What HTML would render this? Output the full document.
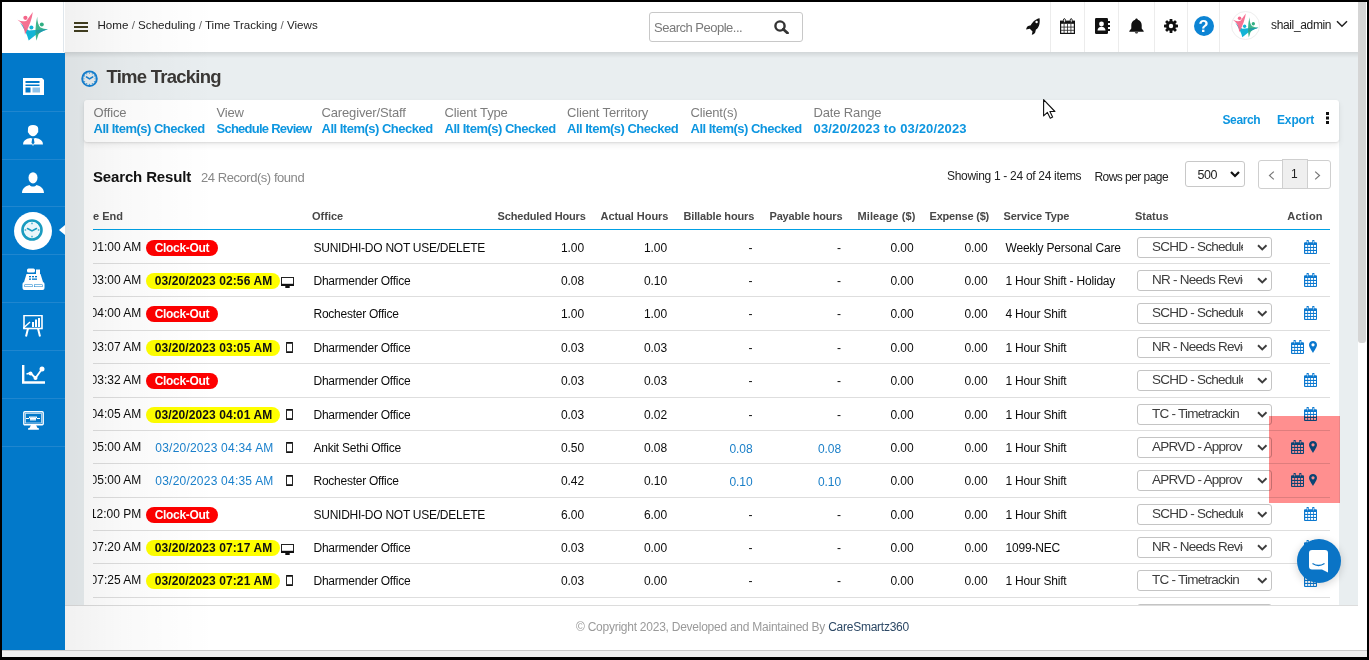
<!DOCTYPE html><html><head><meta charset="utf-8"><title>Time Tracking</title><style>*{box-sizing:border-box;margin:0;padding:0}
html,body{width:1369px;height:660px;overflow:hidden;background:#000;font-family:"Liberation Sans",sans-serif;}
.a{position:absolute}
#vp{position:absolute;left:2px;top:2px;width:1365px;height:655px;background:#fff;overflow:hidden}
/* page coordinates: children of body use absolute coords */
#hdr{position:absolute;left:2px;top:2px;width:1356px;height:50px;background:#fff;}
#logo{position:absolute;left:2px;top:2px;width:62px;height:50px;background:#fff;border-right:1px solid #dfe6ec}
#hgrad{display:none}
#hshadow{position:absolute;left:64px;top:52px;width:1294px;height:6px;background:linear-gradient(180deg,rgba(0,0,0,.10),rgba(0,0,0,0))}
#side{position:absolute;left:2px;top:52.6px;width:63px;height:597.4px;background:#0279ca}
.sep{position:absolute;left:2px;width:63px;height:1px;background:#1f86cf}
#main{position:absolute;left:65px;top:52px;width:1293px;height:553px;background:#e9eef0}
#sshadow{position:absolute;left:65px;top:2px;width:150px;height:648px;background:linear-gradient(90deg,rgba(0,0,0,.055),rgba(0,0,0,.025) 40%,rgba(0,0,0,0));pointer-events:none}
#footer{position:absolute;left:65px;top:605px;width:1293px;height:45px;background:#fff;border-top:1px solid #dcdcdc}
#hscroll{position:absolute;left:2px;top:650px;width:1365px;height:7px;background:#efefef;border-top:1px solid #c9c9c9}
#vscroll{position:absolute;left:1358px;top:2px;width:9px;height:648px;background:#fff}
#thumb{position:absolute;left:1358px;top:2px;width:8px;height:341px;background:#d5d5d5;border-radius:0 0 3px 3px}
.ham{position:absolute;left:74.2px;width:14px;height:1.7px;background:#423f20}
#crumb{position:absolute;left:97.5px;top:17.5px;font-size:11.6px;line-height:14px;color:#222;letter-spacing:0px;white-space:nowrap}
#crumb .sl{color:#666}
#sbox{position:absolute;left:649px;top:12px;width:154px;height:30px;border:1px solid #c8c8c8;border-radius:3px;background:#fff}
#sph{position:absolute;left:654px;top:20px;font-size:13px;line-height:15px;color:#7a7a7a;letter-spacing:-0.5px;white-space:nowrap}
.vsep{position:absolute;top:2px;width:1px;height:50px;background:#ececec}
#uname{position:absolute;left:1271px;top:17.5px;font-size:12px;line-height:14px;color:#222;letter-spacing:-0.35px;white-space:nowrap}
#title{position:absolute;left:106.5px;top:67.3px;font-size:18.5px;line-height:20px;font-weight:700;color:#3a3836;letter-spacing:-0.75px;white-space:nowrap}
.card{position:absolute;background:#fff;box-shadow:0 1px 3px rgba(0,0,0,.16)}
.fl{position:absolute;top:104.5px;font-size:13px;line-height:15px;color:#7d7d7d;letter-spacing:-0.15px;white-space:nowrap}
.fv{position:absolute;top:120.5px;font-size:13px;line-height:15px;color:#0d96e0;font-weight:700;letter-spacing:-0.5px;white-space:nowrap}
.lnk{position:absolute;top:113px;font-size:12px;line-height:14px;color:#0d96e0;font-weight:700;white-space:nowrap}
#sr{position:absolute;left:93px;top:168px;font-size:15px;line-height:17px;font-weight:700;color:#111;letter-spacing:-0.15px;white-space:nowrap}
#rf{position:absolute;left:201px;top:170px;font-size:13px;line-height:15px;color:#888;letter-spacing:-0.45px;white-space:nowrap}
.ptxt{position:absolute;font-size:12px;line-height:14px;color:#222;white-space:nowrap}
#tbl{position:absolute;left:0;top:0;width:1339px;height:605px;clip-path:polygon(93px 0,1339px 0,1339px 605px,93px 605px)}
.th{position:absolute;top:209.8px;font-size:11px;line-height:13px;font-weight:700;color:#484848;white-space:nowrap}
#blue{position:absolute;left:93px;top:228.8px;width:1237px;height:1.6px;background:#00a0e4}
.row{position:absolute;left:0;width:1339px;font-size:12px;color:#0c0c0c}
.row>div{position:absolute;top:10px;line-height:14px;white-space:nowrap}
.row::after{content:"";position:absolute;left:93px;width:1237px;bottom:0;height:1px;background:#dedede}
.row>.t1{right:1197.7px;letter-spacing:0px;top:9.3px}
.badge{left:146px;height:16px;border-radius:8px;font-weight:700;text-align:center}
.row>.badge{top:9px;line-height:16px}
.co{width:72px;background:#fe0000;color:#fff;letter-spacing:-0.3px}
.yl{width:134px;background:#ffff00;color:#111;letter-spacing:0.1px;padding-left:1px}
.bt{left:155.3px;color:#1a80cc;letter-spacing:0.22px}
.dev{line-height:0}
.row>.mon{left:281px;top:13px}
.row>.mob{left:285.5px;top:11px}
.off{left:313.5px;letter-spacing:-0.25px}
.num{letter-spacing:-0.1px}
.row>.num.blue{color:#1a7fc8;top:11px}
.svc{left:1005.5px;letter-spacing:-0.2px}
.row>.sel{left:1137px;top:5.5px;width:135px;height:21px;border:1px solid #c4c4c4;border-radius:3px;background:#fff}
.sel span{position:absolute;left:14px;top:1.3px;width:91px;overflow:hidden;font-size:13.5px;line-height:16px;color:#3c3c3c;letter-spacing:-0.75px;white-space:nowrap}
.chev{position:absolute;left:119px;top:6px;width:10.5px;height:7px}
.act{line-height:0;color:#0b78cf}
.row>.act.one{left:1303.5px;top:9px}
.row>.act.two{left:1291px;top:9px}
.cal{width:13px;height:14px;display:inline-block;vertical-align:top}
.pin{width:8px;height:12px;display:inline-block;vertical-align:top;margin-left:5px;margin-top:1px}
#overlay{position:absolute;left:1269px;top:416px;width:71px;height:87px;background:#ff8f8f;mix-blend-mode:multiply}
#chat{position:absolute;left:1296.8px;top:538.8px;width:44px;height:44px;border-radius:50%;background:#0a74c6;box-shadow:0 2px 8px rgba(0,0,0,.18)}
#foot{position:absolute;left:576px;top:620px;font-size:12px;line-height:14px;color:#9a9a9a;letter-spacing:-0.25px;white-space:nowrap}
#foot b{font-weight:400;color:#2c4865}
#cursor{position:absolute;left:1042.8px;top:98.8px}
</style></head><body><div id="vp"></div>
<div id="hdr"></div>
<div id="hgrad"></div>
<div id="logo"></div>
<div class="a" style="left:14px;top:8px;line-height:0"><svg viewBox="0 0 40 36" width="40" height="36"><path d="M6 14.5 Q11.5 20.5 15 22.5 Q24 21.5 33.8 21.3 Q25 24.5 21 27.5 L14.7 32.4 Q12.5 24 6 14.5 Z" fill="#12b4d6"/><path d="M3.5 11.7 Q8.5 14.2 12.5 12.8 L18.8 4.1 Q18 13 11 26.4 Q10.2 18.5 6.8 14.6 Z" fill="#f4668a" fill-opacity="0.93"/><path d="M23.2 8.7 Q23.3 16.5 26.5 19.5 Q29.5 21.2 33.8 21.3 Q27.5 22.5 24.5 26.3 L22.4 32.7 Q20.2 22 23.2 8.7 Z" fill="#2fae82" fill-opacity="0.92"/><path d="M22 22 L33.8 21.3 Q27 24 22.6 25.5z" fill="#1e8fb8" fill-opacity="0.6"/><circle cx="11.4" cy="9.8" r="2.1" fill="#f4668a"/><circle cx="17.4" cy="19.4" r="2" fill="#12b4d6"/><circle cx="27.8" cy="16.4" r="2" fill="#2fae82"/></svg></div>
<div id="main"></div>
<div class="card" style="left:84px;top:141px;width:1255px;height:470px;box-shadow:none"></div>
<div id="hshadow"></div>
<div id="side"></div>
<div class="sep" style="top:111px"></div>
<div class="sep" style="top:159px"></div>
<div class="sep" style="top:206px"></div>
<div class="sep" style="top:254px"></div>
<div class="sep" style="top:302px"></div>
<div class="sep" style="top:350px"></div>
<div class="sep" style="top:398px"></div>
<div class="sep" style="top:446px"></div>
<!-- sidebar icons -->
<svg class="a" style="left:22px;top:77px" width="23" height="19" viewBox="0 0 23 19"><path d="M1 1h19l2 2v15H1z" fill="#fff"/><rect x="20.5" y="3" width="1.5" height="15" fill="#fff"/><rect x="3.5" y="4" width="14" height="2" fill="#0279ca"/><rect x="3.5" y="7.5" width="14" height="1.5" fill="#0279ca"/><rect x="3.5" y="10.5" width="5" height="5" fill="#0279ca"/><rect x="10.5" y="10.5" width="7.5" height="5" fill="#8fc3ea"/></svg>
<svg class="a" style="left:14px;top:118px" width="38" height="34" viewBox="0 0 38 34"><path d="M14 10.5 Q14 7 19 7 Q24 7 24.2 10.5 L24.2 13.2 Q24.6 14.2 23.6 14.8 Q22 18.2 19 18.2 Q16 18.2 14.4 14.8 Q13.5 14.2 13.9 13.2 Z" fill="#fff"/><path d="M9 26.5 Q9 21.2 16.5 20 L19 20.8 L21.5 20 Q29 21.2 29 26.5 Z" fill="#fff"/><path d="M18.2 20.4 L19.8 20.4 L20.5 24.8 L19 26.6 L17.5 24.8 Z" fill="#0279ca"/><path d="M18.1 26.5 h1.8 L19 28 Z" fill="#fff"/></svg>
<svg class="a" style="left:22px;top:172px" width="22" height="21" viewBox="0 0 22 21"><ellipse cx="11" cy="5.8" rx="4.5" ry="5.6" fill="#fff"/><path d="M0 21c0-4.5 3.5-7 7.5-8 1 1 2 1.5 3.5 1.5s2.5-.5 3.5-1.5c4 1 7.5 3.5 7.5 8z" fill="#fff"/></svg>
<div class="a" style="left:13.5px;top:211.8px;width:38px;height:38px;border-radius:50%;background:#fff"></div>
<svg class="a" style="left:21px;top:219px" width="22" height="22" viewBox="0 0 22 22"><circle cx="11" cy="11" r="9.5" fill="none" stroke="#1a9cc0" stroke-width="2.6"/><circle cx="11" cy="11" r="7.6" fill="#eaf6fa"/><g fill="#1a9cc0"><rect x="10.4" y="3.6" width="1.2" height="1.6"/><rect x="10.4" y="16.8" width="1.2" height="1.6"/><rect x="3.6" y="10.4" width="1.6" height="1.2"/><rect x="16.8" y="10.4" width="1.6" height="1.2"/></g><path d="M6.5 9.5 L11 12 L15.5 9.5" fill="none" stroke="#1a9cc0" stroke-width="1.5" stroke-linecap="round"/></svg>
<svg class="a" style="left:59px;top:225px" width="6" height="10" viewBox="0 0 6 10"><path d="M6 0L0 5l6 5z" fill="#fff"/></svg>
<svg class="a" style="left:22px;top:268px" width="23" height="22" viewBox="0 0 23 22"><rect x="5" y="0.5" width="8" height="4" rx="1.5" fill="#fff"/><rect x="14" y="1.5" width="4" height="5" fill="#fff"/><path d="M4.5 6h14l2.5 8H2z" fill="#fff"/><g fill="#0279ca"><rect x="7" y="8" width="2" height="1.3"/><rect x="10" y="8" width="2" height="1.3"/><rect x="13" y="8" width="2" height="1.3"/><rect x="7" y="10.5" width="2" height="1.3"/><rect x="10" y="10.5" width="5" height="1.3"/></g><rect x="0.5" y="14" width="22" height="8" rx="2" fill="#fff"/><rect x="2.5" y="16.5" width="8" height="2.5" fill="#0279ca"/><rect x="12" y="16.5" width="8.5" height="2.5" fill="#0279ca"/><rect x="3" y="17" width="7" height="1.5" fill="#fff"/><rect x="12.5" y="17" width="7.5" height="1.5" fill="#fff"/></svg>
<svg class="a" style="left:23px;top:315px" width="20" height="22" viewBox="0 0 20 22"><rect x="1" y="0.5" width="18" height="13" fill="none" stroke="#fff" stroke-width="1.6"/><g fill="#fff"><rect x="9" y="7" width="2" height="5"/><rect x="12" y="4.5" width="2" height="7.5"/><rect x="15" y="3" width="2" height="9"/></g><path d="M0 13.5 L7 7" stroke="#fff" stroke-width="1.4"/><path d="M5 13.5 L3 21.5 M15 13.5 L17 21.5" stroke="#fff" stroke-width="2"/></svg>
<svg class="a" style="left:22px;top:365px" width="23" height="19" viewBox="0 0 23 19"><path d="M1.2 0v17.5H23" fill="none" stroke="#fff" stroke-width="2.4"/><path d="M4.5 9 L8.5 8 L13.5 13 L20 4" fill="none" stroke="#fff" stroke-width="1.8"/><circle cx="8.5" cy="8.5" r="2" fill="#fff"/><circle cx="13.5" cy="13" r="2" fill="#fff"/><circle cx="20" cy="4" r="2.5" fill="#fff"/></svg>
<svg class="a" style="left:22.5px;top:411px" width="21" height="19" viewBox="0 0 21 19"><rect x="0.8" y="0.8" width="19.4" height="13" rx="1" fill="none" stroke="#fff" stroke-width="1.4"/><rect x="2.5" y="2.5" width="16" height="9.5" fill="none" stroke="#cfe6f7" stroke-width="0.8"/><path d="M3 7.5h3l1-2 1 4 1-4 1 4 1-4 1 4 1-4 1 2h3" fill="none" stroke="#fff" stroke-width="1"/><path d="M8 14h5l1.5 3H6.5z" fill="#fff"/><rect x="5" y="17" width="11" height="1.8" rx="0.9" fill="#fff"/></svg>
<!-- header -->
<div class="ham" style="top:22.1px"></div><div class="ham" style="top:26px"></div><div class="ham" style="top:30px"></div>
<div id="crumb">Home <span class="sl">/</span> Scheduling <span class="sl">/</span> Time Tracking <span class="sl">/</span> Views</div>
<div id="sbox"></div>
<div id="sph">Search People...</div>
<svg class="a" style="left:774px;top:20px" width="15" height="14" viewBox="0 0 15 14"><circle cx="6" cy="6" r="4.6" fill="none" stroke="#333" stroke-width="2.4"/><path d="M9.3 9.3 L13.5 13" stroke="#333" stroke-width="2.8" stroke-linecap="round"/></svg>
<div class="vsep" style="left:1050px"></div>
<div class="vsep" style="left:1084px"></div>
<div class="vsep" style="left:1118px"></div>
<div class="vsep" style="left:1154px"></div>
<div class="vsep" style="left:1187px"></div>
<div class="vsep" style="left:1219px"></div>
<svg class="a" style="left:1025px;top:17px" width="16" height="19" viewBox="0 0 16 19"><path d="M14.6 1.2 C10.5 1.8 7.5 5 5.8 8.2 L3.2 9 C2 9.6 1.3 11 1.1 12.6 L4.8 11.8 L7.5 14.5 L6.8 17.8 C8.4 17.5 9.6 16.6 10.2 15.4 L10.9 12.6 C13.8 10.8 15.2 7 14.6 1.2 Z" fill="#111"/><circle cx="11.6" cy="5" r="1.2" fill="#fff"/></svg>
<svg class="a" style="left:1060px;top:18px" width="15" height="16" viewBox="0 0 15 16"><rect x="0.6" y="3.2" width="13.8" height="12.2" fill="#fff" stroke="#111" stroke-width="1.2"/><rect x="0.6" y="3.2" width="13.8" height="2.6" fill="#111"/><path d="M4.1 5.8v9.6M7.5 5.8v9.6M10.9 5.8v9.6M0.6 9.1h13.8M0.6 12.3h13.8" stroke="#222" stroke-width="0.8"/><ellipse cx="4.4" cy="2.6" rx="1" ry="2.1" fill="#fff" stroke="#111" stroke-width="0.9"/><ellipse cx="11.2" cy="2.6" rx="1" ry="2.1" fill="#fff" stroke="#111" stroke-width="0.9"/></svg>
<svg class="a" style="left:1095px;top:18px" width="15" height="16" viewBox="0 0 15 16"><rect x="0" y="0" width="13" height="16" rx="1.2" fill="#111"/><rect x="13" y="3" width="2" height="2" fill="#111"/><rect x="13" y="7" width="2" height="2" fill="#111"/><rect x="13" y="11" width="2" height="2" fill="#111"/><circle cx="6.5" cy="6" r="2.4" fill="#fff"/><path d="M2.5 12.5c0-2.5 1.8-3.8 4-3.8s4 1.3 4 3.8z" fill="#fff"/></svg>
<svg class="a" style="left:1129px;top:18px" width="15" height="16" viewBox="0 0 15 16"><path d="M7.5 0.5c-.8 0-1.3.6-1.3 1.3C3.8 2.4 2.3 4.5 2.3 7v3.5L0.3 13v.8h14.4V13l-2-2.5V7c0-2.5-1.5-4.6-3.9-5.2 0-.7-.5-1.3-1.3-1.3z" fill="#111"/><path d="M5.8 14.3a1.8 1.8 0 003.4 0z" fill="#111"/></svg>
<svg class="a" style="left:1164px;top:19px" width="14" height="14" viewBox="0 0 14 14"><g fill="#111"><circle cx="7" cy="7" r="5"/><rect x="5.6" y="0" width="2.8" height="14" rx="0.6"/><rect x="0" y="5.6" width="14" height="2.8" rx="0.6"/><rect x="5.6" y="0" width="2.8" height="14" rx="0.6" transform="rotate(45 7 7)"/><rect x="5.6" y="0" width="2.8" height="14" rx="0.6" transform="rotate(-45 7 7)"/></g><circle cx="7" cy="7" r="2.2" fill="#fff"/></svg>
<div class="a" style="left:1193.5px;top:15.7px;width:20px;height:20px;border-radius:50%;background:#0c84d4"></div>
<div class="a" style="left:1193.5px;top:15.5px;width:20px;height:20px;font-size:16.5px;line-height:20px;font-weight:700;color:#fff;text-align:center">?</div>
<div class="a" style="left:1231px;top:11px;width:29px;height:29px;border-radius:50%;border:1px solid #eee;background:#fff"></div>
<div class="a" style="left:1229.5px;top:10px;line-height:0"><svg viewBox="0 0 40 36" width="33.6" height="30.2"><path d="M6 14.5 Q11.5 20.5 15 22.5 Q24 21.5 33.8 21.3 Q25 24.5 21 27.5 L14.7 32.4 Q12.5 24 6 14.5 Z" fill="#12b4d6"/><path d="M3.5 11.7 Q8.5 14.2 12.5 12.8 L18.8 4.1 Q18 13 11 26.4 Q10.2 18.5 6.8 14.6 Z" fill="#f4668a" fill-opacity="0.93"/><path d="M23.2 8.7 Q23.3 16.5 26.5 19.5 Q29.5 21.2 33.8 21.3 Q27.5 22.5 24.5 26.3 L22.4 32.7 Q20.2 22 23.2 8.7 Z" fill="#2fae82" fill-opacity="0.92"/><path d="M22 22 L33.8 21.3 Q27 24 22.6 25.5z" fill="#1e8fb8" fill-opacity="0.6"/><circle cx="11.4" cy="9.8" r="2.1" fill="#f4668a"/><circle cx="17.4" cy="19.4" r="2" fill="#12b4d6"/><circle cx="27.8" cy="16.4" r="2" fill="#2fae82"/></svg></div>
<div id="uname">shail_admin</div>
<svg class="a" style="left:1336px;top:20px" width="12" height="8" viewBox="0 0 12 8"><path d="M1 1.2 L6 6.3 L11 1.2" fill="none" stroke="#222" stroke-width="1.5"/></svg>
<!-- title -->
<svg class="a" style="left:81px;top:70px" width="17" height="17" viewBox="0 0 17 17"><circle cx="8.5" cy="8.7" r="7.3" fill="none" stroke="#1582d4" stroke-width="1.9"/><circle cx="8.50" cy="3.10" r="0.55" fill="#1a88d6"/><circle cx="11.30" cy="3.85" r="0.55" fill="#1a88d6"/><circle cx="13.35" cy="5.90" r="0.55" fill="#1a88d6"/><circle cx="14.10" cy="8.70" r="0.55" fill="#1a88d6"/><circle cx="13.35" cy="11.50" r="0.55" fill="#1a88d6"/><circle cx="11.30" cy="13.55" r="0.55" fill="#1a88d6"/><circle cx="8.50" cy="14.30" r="0.55" fill="#1a88d6"/><circle cx="5.70" cy="13.55" r="0.55" fill="#1a88d6"/><circle cx="3.65" cy="11.50" r="0.55" fill="#1a88d6"/><circle cx="2.90" cy="8.70" r="0.55" fill="#1a88d6"/><circle cx="3.65" cy="5.90" r="0.55" fill="#1a88d6"/><circle cx="5.70" cy="3.85" r="0.55" fill="#1a88d6"/><path d="M5 6.6 L8.5 8.9 L12.2 6.6" fill="none" stroke="#1582d4" stroke-width="1.7" stroke-linejoin="round"/></svg>
<div id="title">Time Tracking</div>
<!-- filter card -->
<div class="card" style="left:84px;top:100px;width:1255px;height:42px;border-radius:3px;box-shadow:0 1px 2px rgba(0,0,0,.10),0 3px 6px rgba(0,0,0,.07)"></div>
<div class="fl" style="left:93.5px">Office</div><div class="fv" style="left:93.5px">All Item(s) Checked</div>
<div class="fl" style="left:216.5px">View</div><div class="fv" style="left:216.5px;letter-spacing:-0.75px">Schedule Review</div>
<div class="fl" style="left:321.5px">Caregiver/Staff</div><div class="fv" style="left:321.5px">All Item(s) Checked</div>
<div class="fl" style="left:444.5px">Client Type</div><div class="fv" style="left:444.5px">All Item(s) Checked</div>
<div class="fl" style="left:567px">Client Territory</div><div class="fv" style="left:567px">All Item(s) Checked</div>
<div class="fl" style="left:690.5px">Client(s)</div><div class="fv" style="left:690.5px">All Item(s) Checked</div>
<div class="fl" style="left:813.5px">Date Range</div><div class="fv" style="left:813.5px;letter-spacing:0.15px">03/20/2023 to 03/20/2023</div>
<div class="lnk" style="left:1222.5px;letter-spacing:-0.4px">Search</div>
<div class="lnk" style="left:1277px;letter-spacing:-0.15px">Export</div>
<svg class="a" style="left:1326px;top:112px" width="3" height="12" viewBox="0 0 3 12"><rect x="0" y="0" width="3" height="3" fill="#111"/><rect x="0" y="4.5" width="3" height="3" fill="#111"/><rect x="0" y="9" width="3" height="3" fill="#111"/></svg>
<!-- result card -->
<div id="sr">Search Result</div>
<div id="rf">24 Record(s) found</div>
<div class="ptxt" style="left:947px;top:169px;letter-spacing:-0.3px">Showing 1 - 24 of 24 items</div>
<div class="ptxt" style="left:1094.5px;top:170px;letter-spacing:-0.55px">Rows per page</div>
<div class="a" style="left:1184.5px;top:161px;width:60px;height:25.5px;border:1px solid #c8c8c8;border-radius:3px;background:#fff"></div>
<div class="ptxt" style="left:1197.5px;top:167.5px;font-size:12.5px;line-height:14px;color:#222;letter-spacing:-0.4px">500</div>
<svg class="a" style="left:1230px;top:171px" width="10" height="7" viewBox="0 0 10 7"><path d="M1 1 L5 5 L9 1" fill="none" stroke="#111" stroke-width="2.2"/></svg>
<div class="a" style="left:1258px;top:160px;width:73px;height:28.5px;border:1px solid #cfcfcf;border-radius:3px;background:#fff"></div>
<div class="a" style="left:1281.5px;top:159px;width:26.5px;height:29.5px;border:1px solid #cfcfcf;background:#efefef"></div>
<div class="ptxt" style="left:1291px;top:166.5px;font-size:12px;line-height:14px;color:#222">1</div>
<svg class="a" style="left:1267.5px;top:170.5px" width="7" height="9" viewBox="0 0 7 9"><path d="M5.8 0.6 L1.5 4.5 L5.8 8.4" fill="none" stroke="#777" stroke-width="1.2"/></svg>
<svg class="a" style="left:1314px;top:170.5px" width="7" height="9" viewBox="0 0 7 9"><path d="M1.2 0.6 L5.5 4.5 L1.2 8.4" fill="none" stroke="#777" stroke-width="1.2"/></svg>
<div id="tbl">
<div class="th" style="left:93px">e End</div>
<div class="th" style="left:312px">Office</div>
<div class="th" style="left:497.5px;letter-spacing:-0.15px">Scheduled Hours</div>
<div class="th" style="left:600.5px;letter-spacing:-0.05px">Actual Hours</div>
<div class="th" style="left:683.5px;letter-spacing:-0.15px">Billable hours</div>
<div class="th" style="left:769.5px;letter-spacing:-0.18px">Payable hours</div>
<div class="th" style="left:857.5px;letter-spacing:0.1px">Mileage ($)</div>
<div class="th" style="left:929.5px;letter-spacing:-0.2px">Expense ($)</div>
<div class="th" style="left:1003.5px;letter-spacing:-0.1px">Service Type</div>
<div class="th" style="left:1135px">Status</div>
<div class="th" style="left:1287.3px;letter-spacing:0.2px">Action</div>
<div id="blue"></div>
<div class="row" style="top:231px;height:33px"><div class="t1">01:00 AM</div><div class="badge co">Clock-Out</div><div class="off">SUNIDHI-DO NOT USE/DELETE</div><div class="num" style="right:755px">1.00</div><div class="num" style="right:672px">1.00</div><div class="num" style="right:586.5px">-</div><div class="num" style="right:498.0px">-</div><div class="num" style="right:425.5px">0.00</div><div class="num" style="right:351.5px">0.00</div><div class="svc">Weekly Personal Care</div><div class="sel"><span>SCHD - Schedule</span><svg class="chev" viewBox="0 0 10.5 7"><path d="M1 1.2 L5.25 5.4 L9.5 1.2" fill="none" stroke="#3d3d3d" stroke-width="1.9"/></svg></div><div class="act one"><svg class="cal" viewBox="0 0 13 14"><path d="M1 2.2h11a1 1 0 011 1V13a1 1 0 01-1 1H1a1 1 0 01-1-1V3.2a1 1 0 011-1z" fill="currentColor"/><rect x="2.6" y="0" width="2.2" height="4" rx="0.6" fill="currentColor"/><rect x="8.2" y="0" width="2.2" height="4" rx="0.6" fill="currentColor"/><rect x="3.3" y="1" width="0.8" height="2.4" fill="#bfe0f7"/><rect x="8.9" y="1" width="0.8" height="2.4" fill="#bfe0f7"/><g fill="#fff"><rect x="1.2" y="5.0" width="2.1" height="1.9"/><rect x="4.1" y="5.0" width="2.1" height="1.9"/><rect x="7.0" y="5.0" width="2.1" height="1.9"/><rect x="9.9" y="5.0" width="2.1" height="1.9"/><rect x="1.2" y="8.0" width="2.1" height="1.9"/><rect x="4.1" y="8.0" width="2.1" height="1.9"/><rect x="7.0" y="8.0" width="2.1" height="1.9"/><rect x="9.9" y="8.0" width="2.1" height="1.9"/><rect x="1.2" y="11.0" width="2.1" height="1.9"/><rect x="4.1" y="11.0" width="2.1" height="1.9"/><rect x="7.0" y="11.0" width="2.1" height="1.9"/><rect x="9.9" y="11.0" width="2.1" height="1.9"/></g></svg></div></div><div class="row" style="top:264px;height:33px"><div class="t1">03:00 AM</div><div class="badge yl">03/20/2023 02:56 AM</div><div class="dev mon"><svg viewBox="0 0 13 11" width="13" height="11"><rect x="0.5" y="0.5" width="12" height="7.5" fill="none" stroke="#222" stroke-width="1"/><rect x="0" y="6.8" width="13" height="2.2" fill="#111"/><rect x="4.3" y="9" width="4.4" height="2" fill="#111"/></svg></div><div class="off">Dharmender Office</div><div class="num" style="right:755px">0.08</div><div class="num" style="right:672px">0.10</div><div class="num" style="right:586.5px">-</div><div class="num" style="right:498.0px">-</div><div class="num" style="right:425.5px">0.00</div><div class="num" style="right:351.5px">0.00</div><div class="svc">1 Hour Shift - Holiday</div><div class="sel"><span>NR - Needs Revie</span><svg class="chev" viewBox="0 0 10.5 7"><path d="M1 1.2 L5.25 5.4 L9.5 1.2" fill="none" stroke="#3d3d3d" stroke-width="1.9"/></svg></div><div class="act one"><svg class="cal" viewBox="0 0 13 14"><path d="M1 2.2h11a1 1 0 011 1V13a1 1 0 01-1 1H1a1 1 0 01-1-1V3.2a1 1 0 011-1z" fill="currentColor"/><rect x="2.6" y="0" width="2.2" height="4" rx="0.6" fill="currentColor"/><rect x="8.2" y="0" width="2.2" height="4" rx="0.6" fill="currentColor"/><rect x="3.3" y="1" width="0.8" height="2.4" fill="#bfe0f7"/><rect x="8.9" y="1" width="0.8" height="2.4" fill="#bfe0f7"/><g fill="#fff"><rect x="1.2" y="5.0" width="2.1" height="1.9"/><rect x="4.1" y="5.0" width="2.1" height="1.9"/><rect x="7.0" y="5.0" width="2.1" height="1.9"/><rect x="9.9" y="5.0" width="2.1" height="1.9"/><rect x="1.2" y="8.0" width="2.1" height="1.9"/><rect x="4.1" y="8.0" width="2.1" height="1.9"/><rect x="7.0" y="8.0" width="2.1" height="1.9"/><rect x="9.9" y="8.0" width="2.1" height="1.9"/><rect x="1.2" y="11.0" width="2.1" height="1.9"/><rect x="4.1" y="11.0" width="2.1" height="1.9"/><rect x="7.0" y="11.0" width="2.1" height="1.9"/><rect x="9.9" y="11.0" width="2.1" height="1.9"/></g></svg></div></div><div class="row" style="top:297px;height:34px"><div class="t1">04:00 AM</div><div class="badge co">Clock-Out</div><div class="off">Rochester Office</div><div class="num" style="right:755px">1.00</div><div class="num" style="right:672px">1.00</div><div class="num" style="right:586.5px">-</div><div class="num" style="right:498.0px">-</div><div class="num" style="right:425.5px">0.00</div><div class="num" style="right:351.5px">0.00</div><div class="svc">4 Hour Shift</div><div class="sel"><span>SCHD - Schedule</span><svg class="chev" viewBox="0 0 10.5 7"><path d="M1 1.2 L5.25 5.4 L9.5 1.2" fill="none" stroke="#3d3d3d" stroke-width="1.9"/></svg></div><div class="act one"><svg class="cal" viewBox="0 0 13 14"><path d="M1 2.2h11a1 1 0 011 1V13a1 1 0 01-1 1H1a1 1 0 01-1-1V3.2a1 1 0 011-1z" fill="currentColor"/><rect x="2.6" y="0" width="2.2" height="4" rx="0.6" fill="currentColor"/><rect x="8.2" y="0" width="2.2" height="4" rx="0.6" fill="currentColor"/><rect x="3.3" y="1" width="0.8" height="2.4" fill="#bfe0f7"/><rect x="8.9" y="1" width="0.8" height="2.4" fill="#bfe0f7"/><g fill="#fff"><rect x="1.2" y="5.0" width="2.1" height="1.9"/><rect x="4.1" y="5.0" width="2.1" height="1.9"/><rect x="7.0" y="5.0" width="2.1" height="1.9"/><rect x="9.9" y="5.0" width="2.1" height="1.9"/><rect x="1.2" y="8.0" width="2.1" height="1.9"/><rect x="4.1" y="8.0" width="2.1" height="1.9"/><rect x="7.0" y="8.0" width="2.1" height="1.9"/><rect x="9.9" y="8.0" width="2.1" height="1.9"/><rect x="1.2" y="11.0" width="2.1" height="1.9"/><rect x="4.1" y="11.0" width="2.1" height="1.9"/><rect x="7.0" y="11.0" width="2.1" height="1.9"/><rect x="9.9" y="11.0" width="2.1" height="1.9"/></g></svg></div></div><div class="row" style="top:331px;height:33px"><div class="t1">03:07 AM</div><div class="badge yl">03/20/2023 03:05 AM</div><div class="dev mob"><svg viewBox="0 0 7 11" width="7" height="11"><rect x="0.5" y="0.5" width="6" height="10" rx="1" fill="none" stroke="#222" stroke-width="1"/><rect x="0" y="0" width="7" height="1.7" rx="0.8" fill="#111"/><rect x="0" y="9.3" width="7" height="1.7" rx="0.8" fill="#111"/></svg></div><div class="off">Dharmender Office</div><div class="num" style="right:755px">0.03</div><div class="num" style="right:672px">0.03</div><div class="num" style="right:586.5px">-</div><div class="num" style="right:498.0px">-</div><div class="num" style="right:425.5px">0.00</div><div class="num" style="right:351.5px">0.00</div><div class="svc">1 Hour Shift</div><div class="sel"><span>NR - Needs Revie</span><svg class="chev" viewBox="0 0 10.5 7"><path d="M1 1.2 L5.25 5.4 L9.5 1.2" fill="none" stroke="#3d3d3d" stroke-width="1.9"/></svg></div><div class="act two"><svg class="cal" viewBox="0 0 13 14"><path d="M1 2.2h11a1 1 0 011 1V13a1 1 0 01-1 1H1a1 1 0 01-1-1V3.2a1 1 0 011-1z" fill="currentColor"/><rect x="2.6" y="0" width="2.2" height="4" rx="0.6" fill="currentColor"/><rect x="8.2" y="0" width="2.2" height="4" rx="0.6" fill="currentColor"/><rect x="3.3" y="1" width="0.8" height="2.4" fill="#bfe0f7"/><rect x="8.9" y="1" width="0.8" height="2.4" fill="#bfe0f7"/><g fill="#fff"><rect x="1.2" y="5.0" width="2.1" height="1.9"/><rect x="4.1" y="5.0" width="2.1" height="1.9"/><rect x="7.0" y="5.0" width="2.1" height="1.9"/><rect x="9.9" y="5.0" width="2.1" height="1.9"/><rect x="1.2" y="8.0" width="2.1" height="1.9"/><rect x="4.1" y="8.0" width="2.1" height="1.9"/><rect x="7.0" y="8.0" width="2.1" height="1.9"/><rect x="9.9" y="8.0" width="2.1" height="1.9"/><rect x="1.2" y="11.0" width="2.1" height="1.9"/><rect x="4.1" y="11.0" width="2.1" height="1.9"/><rect x="7.0" y="11.0" width="2.1" height="1.9"/><rect x="9.9" y="11.0" width="2.1" height="1.9"/></g></svg><svg class="pin" viewBox="0 0 8 12"><path d="M4 0C1.8 0 0 1.7 0 3.9c0 1.9 2.6 5.6 4 8.1 1.4-2.5 4-6.2 4-8.1C8 1.7 6.2 0 4 0z" fill="currentColor"/><circle cx="4" cy="3.8" r="1.6" fill="#fff"/></svg></div></div><div class="row" style="top:364px;height:34px"><div class="t1">03:32 AM</div><div class="badge co">Clock-Out</div><div class="off">Dharmender Office</div><div class="num" style="right:755px">0.03</div><div class="num" style="right:672px">0.03</div><div class="num" style="right:586.5px">-</div><div class="num" style="right:498.0px">-</div><div class="num" style="right:425.5px">0.00</div><div class="num" style="right:351.5px">0.00</div><div class="svc">1 Hour Shift</div><div class="sel"><span>SCHD - Schedule</span><svg class="chev" viewBox="0 0 10.5 7"><path d="M1 1.2 L5.25 5.4 L9.5 1.2" fill="none" stroke="#3d3d3d" stroke-width="1.9"/></svg></div><div class="act one"><svg class="cal" viewBox="0 0 13 14"><path d="M1 2.2h11a1 1 0 011 1V13a1 1 0 01-1 1H1a1 1 0 01-1-1V3.2a1 1 0 011-1z" fill="currentColor"/><rect x="2.6" y="0" width="2.2" height="4" rx="0.6" fill="currentColor"/><rect x="8.2" y="0" width="2.2" height="4" rx="0.6" fill="currentColor"/><rect x="3.3" y="1" width="0.8" height="2.4" fill="#bfe0f7"/><rect x="8.9" y="1" width="0.8" height="2.4" fill="#bfe0f7"/><g fill="#fff"><rect x="1.2" y="5.0" width="2.1" height="1.9"/><rect x="4.1" y="5.0" width="2.1" height="1.9"/><rect x="7.0" y="5.0" width="2.1" height="1.9"/><rect x="9.9" y="5.0" width="2.1" height="1.9"/><rect x="1.2" y="8.0" width="2.1" height="1.9"/><rect x="4.1" y="8.0" width="2.1" height="1.9"/><rect x="7.0" y="8.0" width="2.1" height="1.9"/><rect x="9.9" y="8.0" width="2.1" height="1.9"/><rect x="1.2" y="11.0" width="2.1" height="1.9"/><rect x="4.1" y="11.0" width="2.1" height="1.9"/><rect x="7.0" y="11.0" width="2.1" height="1.9"/><rect x="9.9" y="11.0" width="2.1" height="1.9"/></g></svg></div></div><div class="row" style="top:398px;height:33px"><div class="t1">04:05 AM</div><div class="badge yl">03/20/2023 04:01 AM</div><div class="dev mob"><svg viewBox="0 0 7 11" width="7" height="11"><rect x="0.5" y="0.5" width="6" height="10" rx="1" fill="none" stroke="#222" stroke-width="1"/><rect x="0" y="0" width="7" height="1.7" rx="0.8" fill="#111"/><rect x="0" y="9.3" width="7" height="1.7" rx="0.8" fill="#111"/></svg></div><div class="off">Dharmender Office</div><div class="num" style="right:755px">0.03</div><div class="num" style="right:672px">0.02</div><div class="num" style="right:586.5px">-</div><div class="num" style="right:498.0px">-</div><div class="num" style="right:425.5px">0.00</div><div class="num" style="right:351.5px">0.00</div><div class="svc">1 Hour Shift</div><div class="sel"><span>TC - Timetrackin</span><svg class="chev" viewBox="0 0 10.5 7"><path d="M1 1.2 L5.25 5.4 L9.5 1.2" fill="none" stroke="#3d3d3d" stroke-width="1.9"/></svg></div><div class="act one"><svg class="cal" viewBox="0 0 13 14"><path d="M1 2.2h11a1 1 0 011 1V13a1 1 0 01-1 1H1a1 1 0 01-1-1V3.2a1 1 0 011-1z" fill="currentColor"/><rect x="2.6" y="0" width="2.2" height="4" rx="0.6" fill="currentColor"/><rect x="8.2" y="0" width="2.2" height="4" rx="0.6" fill="currentColor"/><rect x="3.3" y="1" width="0.8" height="2.4" fill="#bfe0f7"/><rect x="8.9" y="1" width="0.8" height="2.4" fill="#bfe0f7"/><g fill="#fff"><rect x="1.2" y="5.0" width="2.1" height="1.9"/><rect x="4.1" y="5.0" width="2.1" height="1.9"/><rect x="7.0" y="5.0" width="2.1" height="1.9"/><rect x="9.9" y="5.0" width="2.1" height="1.9"/><rect x="1.2" y="8.0" width="2.1" height="1.9"/><rect x="4.1" y="8.0" width="2.1" height="1.9"/><rect x="7.0" y="8.0" width="2.1" height="1.9"/><rect x="9.9" y="8.0" width="2.1" height="1.9"/><rect x="1.2" y="11.0" width="2.1" height="1.9"/><rect x="4.1" y="11.0" width="2.1" height="1.9"/><rect x="7.0" y="11.0" width="2.1" height="1.9"/><rect x="9.9" y="11.0" width="2.1" height="1.9"/></g></svg></div></div><div class="row" style="top:431px;height:33px"><div class="t1">05:00 AM</div><div class="bt">03/20/2023 04:34 AM</div><div class="dev mob"><svg viewBox="0 0 7 11" width="7" height="11"><rect x="0.5" y="0.5" width="6" height="10" rx="1" fill="none" stroke="#222" stroke-width="1"/><rect x="0" y="0" width="7" height="1.7" rx="0.8" fill="#111"/><rect x="0" y="9.3" width="7" height="1.7" rx="0.8" fill="#111"/></svg></div><div class="off">Ankit Sethi Office</div><div class="num" style="right:755px">0.50</div><div class="num" style="right:672px">0.08</div><div class="num blue" style="right:586.5px">0.08</div><div class="num blue" style="right:498.0px">0.08</div><div class="num" style="right:425.5px">0.00</div><div class="num" style="right:351.5px">0.00</div><div class="svc">1 Hour Shift</div><div class="sel"><span>APRVD - Approv</span><svg class="chev" viewBox="0 0 10.5 7"><path d="M1 1.2 L5.25 5.4 L9.5 1.2" fill="none" stroke="#3d3d3d" stroke-width="1.9"/></svg></div><div class="act two"><svg class="cal" viewBox="0 0 13 14"><path d="M1 2.2h11a1 1 0 011 1V13a1 1 0 01-1 1H1a1 1 0 01-1-1V3.2a1 1 0 011-1z" fill="currentColor"/><rect x="2.6" y="0" width="2.2" height="4" rx="0.6" fill="currentColor"/><rect x="8.2" y="0" width="2.2" height="4" rx="0.6" fill="currentColor"/><rect x="3.3" y="1" width="0.8" height="2.4" fill="#bfe0f7"/><rect x="8.9" y="1" width="0.8" height="2.4" fill="#bfe0f7"/><g fill="#fff"><rect x="1.2" y="5.0" width="2.1" height="1.9"/><rect x="4.1" y="5.0" width="2.1" height="1.9"/><rect x="7.0" y="5.0" width="2.1" height="1.9"/><rect x="9.9" y="5.0" width="2.1" height="1.9"/><rect x="1.2" y="8.0" width="2.1" height="1.9"/><rect x="4.1" y="8.0" width="2.1" height="1.9"/><rect x="7.0" y="8.0" width="2.1" height="1.9"/><rect x="9.9" y="8.0" width="2.1" height="1.9"/><rect x="1.2" y="11.0" width="2.1" height="1.9"/><rect x="4.1" y="11.0" width="2.1" height="1.9"/><rect x="7.0" y="11.0" width="2.1" height="1.9"/><rect x="9.9" y="11.0" width="2.1" height="1.9"/></g></svg><svg class="pin" viewBox="0 0 8 12"><path d="M4 0C1.8 0 0 1.7 0 3.9c0 1.9 2.6 5.6 4 8.1 1.4-2.5 4-6.2 4-8.1C8 1.7 6.2 0 4 0z" fill="currentColor"/><circle cx="4" cy="3.8" r="1.6" fill="#fff"/></svg></div></div><div class="row" style="top:464px;height:34px"><div class="t1">05:00 AM</div><div class="bt">03/20/2023 04:35 AM</div><div class="dev mob"><svg viewBox="0 0 7 11" width="7" height="11"><rect x="0.5" y="0.5" width="6" height="10" rx="1" fill="none" stroke="#222" stroke-width="1"/><rect x="0" y="0" width="7" height="1.7" rx="0.8" fill="#111"/><rect x="0" y="9.3" width="7" height="1.7" rx="0.8" fill="#111"/></svg></div><div class="off">Rochester Office</div><div class="num" style="right:755px">0.42</div><div class="num" style="right:672px">0.10</div><div class="num blue" style="right:586.5px">0.10</div><div class="num blue" style="right:498.0px">0.10</div><div class="num" style="right:425.5px">0.00</div><div class="num" style="right:351.5px">0.00</div><div class="svc">1 Hour Shift</div><div class="sel"><span>APRVD - Approv</span><svg class="chev" viewBox="0 0 10.5 7"><path d="M1 1.2 L5.25 5.4 L9.5 1.2" fill="none" stroke="#3d3d3d" stroke-width="1.9"/></svg></div><div class="act two"><svg class="cal" viewBox="0 0 13 14"><path d="M1 2.2h11a1 1 0 011 1V13a1 1 0 01-1 1H1a1 1 0 01-1-1V3.2a1 1 0 011-1z" fill="currentColor"/><rect x="2.6" y="0" width="2.2" height="4" rx="0.6" fill="currentColor"/><rect x="8.2" y="0" width="2.2" height="4" rx="0.6" fill="currentColor"/><rect x="3.3" y="1" width="0.8" height="2.4" fill="#bfe0f7"/><rect x="8.9" y="1" width="0.8" height="2.4" fill="#bfe0f7"/><g fill="#fff"><rect x="1.2" y="5.0" width="2.1" height="1.9"/><rect x="4.1" y="5.0" width="2.1" height="1.9"/><rect x="7.0" y="5.0" width="2.1" height="1.9"/><rect x="9.9" y="5.0" width="2.1" height="1.9"/><rect x="1.2" y="8.0" width="2.1" height="1.9"/><rect x="4.1" y="8.0" width="2.1" height="1.9"/><rect x="7.0" y="8.0" width="2.1" height="1.9"/><rect x="9.9" y="8.0" width="2.1" height="1.9"/><rect x="1.2" y="11.0" width="2.1" height="1.9"/><rect x="4.1" y="11.0" width="2.1" height="1.9"/><rect x="7.0" y="11.0" width="2.1" height="1.9"/><rect x="9.9" y="11.0" width="2.1" height="1.9"/></g></svg><svg class="pin" viewBox="0 0 8 12"><path d="M4 0C1.8 0 0 1.7 0 3.9c0 1.9 2.6 5.6 4 8.1 1.4-2.5 4-6.2 4-8.1C8 1.7 6.2 0 4 0z" fill="currentColor"/><circle cx="4" cy="3.8" r="1.6" fill="#fff"/></svg></div></div><div class="row" style="top:498px;height:33px"><div class="t1">12:00 PM</div><div class="badge co">Clock-Out</div><div class="off">SUNIDHI-DO NOT USE/DELETE</div><div class="num" style="right:755px">6.00</div><div class="num" style="right:672px">6.00</div><div class="num" style="right:586.5px">-</div><div class="num" style="right:498.0px">-</div><div class="num" style="right:425.5px">0.00</div><div class="num" style="right:351.5px">0.00</div><div class="svc">1 Hour Shift</div><div class="sel"><span>SCHD - Schedule</span><svg class="chev" viewBox="0 0 10.5 7"><path d="M1 1.2 L5.25 5.4 L9.5 1.2" fill="none" stroke="#3d3d3d" stroke-width="1.9"/></svg></div><div class="act one"><svg class="cal" viewBox="0 0 13 14"><path d="M1 2.2h11a1 1 0 011 1V13a1 1 0 01-1 1H1a1 1 0 01-1-1V3.2a1 1 0 011-1z" fill="currentColor"/><rect x="2.6" y="0" width="2.2" height="4" rx="0.6" fill="currentColor"/><rect x="8.2" y="0" width="2.2" height="4" rx="0.6" fill="currentColor"/><rect x="3.3" y="1" width="0.8" height="2.4" fill="#bfe0f7"/><rect x="8.9" y="1" width="0.8" height="2.4" fill="#bfe0f7"/><g fill="#fff"><rect x="1.2" y="5.0" width="2.1" height="1.9"/><rect x="4.1" y="5.0" width="2.1" height="1.9"/><rect x="7.0" y="5.0" width="2.1" height="1.9"/><rect x="9.9" y="5.0" width="2.1" height="1.9"/><rect x="1.2" y="8.0" width="2.1" height="1.9"/><rect x="4.1" y="8.0" width="2.1" height="1.9"/><rect x="7.0" y="8.0" width="2.1" height="1.9"/><rect x="9.9" y="8.0" width="2.1" height="1.9"/><rect x="1.2" y="11.0" width="2.1" height="1.9"/><rect x="4.1" y="11.0" width="2.1" height="1.9"/><rect x="7.0" y="11.0" width="2.1" height="1.9"/><rect x="9.9" y="11.0" width="2.1" height="1.9"/></g></svg></div></div><div class="row" style="top:531px;height:33px"><div class="t1">07:20 AM</div><div class="badge yl">03/20/2023 07:17 AM</div><div class="dev mon"><svg viewBox="0 0 13 11" width="13" height="11"><rect x="0.5" y="0.5" width="12" height="7.5" fill="none" stroke="#222" stroke-width="1"/><rect x="0" y="6.8" width="13" height="2.2" fill="#111"/><rect x="4.3" y="9" width="4.4" height="2" fill="#111"/></svg></div><div class="off">Dharmender Office</div><div class="num" style="right:755px">0.03</div><div class="num" style="right:672px">0.00</div><div class="num" style="right:586.5px">-</div><div class="num" style="right:498.0px">-</div><div class="num" style="right:425.5px">0.00</div><div class="num" style="right:351.5px">0.00</div><div class="svc">1099-NEC</div><div class="sel"><span>NR - Needs Revie</span><svg class="chev" viewBox="0 0 10.5 7"><path d="M1 1.2 L5.25 5.4 L9.5 1.2" fill="none" stroke="#3d3d3d" stroke-width="1.9"/></svg></div><div class="act one"><svg class="cal" viewBox="0 0 13 14"><path d="M1 2.2h11a1 1 0 011 1V13a1 1 0 01-1 1H1a1 1 0 01-1-1V3.2a1 1 0 011-1z" fill="currentColor"/><rect x="2.6" y="0" width="2.2" height="4" rx="0.6" fill="currentColor"/><rect x="8.2" y="0" width="2.2" height="4" rx="0.6" fill="currentColor"/><rect x="3.3" y="1" width="0.8" height="2.4" fill="#bfe0f7"/><rect x="8.9" y="1" width="0.8" height="2.4" fill="#bfe0f7"/><g fill="#fff"><rect x="1.2" y="5.0" width="2.1" height="1.9"/><rect x="4.1" y="5.0" width="2.1" height="1.9"/><rect x="7.0" y="5.0" width="2.1" height="1.9"/><rect x="9.9" y="5.0" width="2.1" height="1.9"/><rect x="1.2" y="8.0" width="2.1" height="1.9"/><rect x="4.1" y="8.0" width="2.1" height="1.9"/><rect x="7.0" y="8.0" width="2.1" height="1.9"/><rect x="9.9" y="8.0" width="2.1" height="1.9"/><rect x="1.2" y="11.0" width="2.1" height="1.9"/><rect x="4.1" y="11.0" width="2.1" height="1.9"/><rect x="7.0" y="11.0" width="2.1" height="1.9"/><rect x="9.9" y="11.0" width="2.1" height="1.9"/></g></svg></div></div><div class="row" style="top:564px;height:34px"><div class="t1">07:25 AM</div><div class="badge yl">03/20/2023 07:21 AM</div><div class="dev mob"><svg viewBox="0 0 7 11" width="7" height="11"><rect x="0.5" y="0.5" width="6" height="10" rx="1" fill="none" stroke="#222" stroke-width="1"/><rect x="0" y="0" width="7" height="1.7" rx="0.8" fill="#111"/><rect x="0" y="9.3" width="7" height="1.7" rx="0.8" fill="#111"/></svg></div><div class="off">Dharmender Office</div><div class="num" style="right:755px">0.03</div><div class="num" style="right:672px">0.00</div><div class="num" style="right:586.5px">-</div><div class="num" style="right:498.0px">-</div><div class="num" style="right:425.5px">0.00</div><div class="num" style="right:351.5px">0.00</div><div class="svc">1 Hour Shift</div><div class="sel"><span>TC - Timetrackin</span><svg class="chev" viewBox="0 0 10.5 7"><path d="M1 1.2 L5.25 5.4 L9.5 1.2" fill="none" stroke="#3d3d3d" stroke-width="1.9"/></svg></div><div class="act one"><svg class="cal" viewBox="0 0 13 14"><path d="M1 2.2h11a1 1 0 011 1V13a1 1 0 01-1 1H1a1 1 0 01-1-1V3.2a1 1 0 011-1z" fill="currentColor"/><rect x="2.6" y="0" width="2.2" height="4" rx="0.6" fill="currentColor"/><rect x="8.2" y="0" width="2.2" height="4" rx="0.6" fill="currentColor"/><rect x="3.3" y="1" width="0.8" height="2.4" fill="#bfe0f7"/><rect x="8.9" y="1" width="0.8" height="2.4" fill="#bfe0f7"/><g fill="#fff"><rect x="1.2" y="5.0" width="2.1" height="1.9"/><rect x="4.1" y="5.0" width="2.1" height="1.9"/><rect x="7.0" y="5.0" width="2.1" height="1.9"/><rect x="9.9" y="5.0" width="2.1" height="1.9"/><rect x="1.2" y="8.0" width="2.1" height="1.9"/><rect x="4.1" y="8.0" width="2.1" height="1.9"/><rect x="7.0" y="8.0" width="2.1" height="1.9"/><rect x="9.9" y="8.0" width="2.1" height="1.9"/><rect x="1.2" y="11.0" width="2.1" height="1.9"/><rect x="4.1" y="11.0" width="2.1" height="1.9"/><rect x="7.0" y="11.0" width="2.1" height="1.9"/><rect x="9.9" y="11.0" width="2.1" height="1.9"/></g></svg></div></div><div class="row" style="top:598px;height:33px"><div class="t1">07:30 AM</div><div class="badge yl">03/20/2023 07:28 AM</div><div class="dev mob"><svg viewBox="0 0 7 11" width="7" height="11"><rect x="0.5" y="0.5" width="6" height="10" rx="1" fill="none" stroke="#222" stroke-width="1"/><rect x="0" y="0" width="7" height="1.7" rx="0.8" fill="#111"/><rect x="0" y="9.3" width="7" height="1.7" rx="0.8" fill="#111"/></svg></div><div class="off">Dharmender Office</div><div class="num" style="right:755px">0.03</div><div class="num" style="right:672px">0.00</div><div class="num" style="right:586.5px">-</div><div class="num" style="right:498.0px">-</div><div class="num" style="right:425.5px">0.00</div><div class="num" style="right:351.5px">0.00</div><div class="svc">1 Hour Shift</div><div class="sel"><span>TC - Timetrackin</span><svg class="chev" viewBox="0 0 10.5 7"><path d="M1 1.2 L5.25 5.4 L9.5 1.2" fill="none" stroke="#3d3d3d" stroke-width="1.9"/></svg></div><div class="act one"><svg class="cal" viewBox="0 0 13 14"><path d="M1 2.2h11a1 1 0 011 1V13a1 1 0 01-1 1H1a1 1 0 01-1-1V3.2a1 1 0 011-1z" fill="currentColor"/><rect x="2.6" y="0" width="2.2" height="4" rx="0.6" fill="currentColor"/><rect x="8.2" y="0" width="2.2" height="4" rx="0.6" fill="currentColor"/><rect x="3.3" y="1" width="0.8" height="2.4" fill="#bfe0f7"/><rect x="8.9" y="1" width="0.8" height="2.4" fill="#bfe0f7"/><g fill="#fff"><rect x="1.2" y="5.0" width="2.1" height="1.9"/><rect x="4.1" y="5.0" width="2.1" height="1.9"/><rect x="7.0" y="5.0" width="2.1" height="1.9"/><rect x="9.9" y="5.0" width="2.1" height="1.9"/><rect x="1.2" y="8.0" width="2.1" height="1.9"/><rect x="4.1" y="8.0" width="2.1" height="1.9"/><rect x="7.0" y="8.0" width="2.1" height="1.9"/><rect x="9.9" y="8.0" width="2.1" height="1.9"/><rect x="1.2" y="11.0" width="2.1" height="1.9"/><rect x="4.1" y="11.0" width="2.1" height="1.9"/><rect x="7.0" y="11.0" width="2.1" height="1.9"/><rect x="9.9" y="11.0" width="2.1" height="1.9"/></g></svg></div></div>
</div>
<div id="footer"></div>
<div id="sshadow"></div>
<div id="foot">© Copyright 2023, Developed and Maintained By <b>CareSmartz360</b></div>
<div id="overlay"></div>
<div id="chat"></div>
<svg class="a" style="left:1309px;top:549.5px" width="20" height="23" viewBox="0 0 20 23"><path d="M3 0h13a3 3 0 013 3v19.5l-6-3H3a3 3 0 01-3-3V3a3 3 0 013-3z" fill="#fff"/><path d="M3.5 13.5 Q9.5 17.5 15.5 13.5" fill="none" stroke="#0a74c6" stroke-width="1.3"/></svg>
<svg id="cursor" width="13" height="20" viewBox="0 0 13 20"><path d="M0.6 0.6 L0.6 16.9 L4.4 13.4 L7.3 19.2 L9.6 18.1 L6.9 12.5 L11.9 12.5 Z" fill="#fff" stroke="#111" stroke-width="1.1" stroke-linejoin="round"/></svg>
<div id="hscroll"></div>
<div id="vscroll"></div>
<div id="thumb"></div>
</body></html>
